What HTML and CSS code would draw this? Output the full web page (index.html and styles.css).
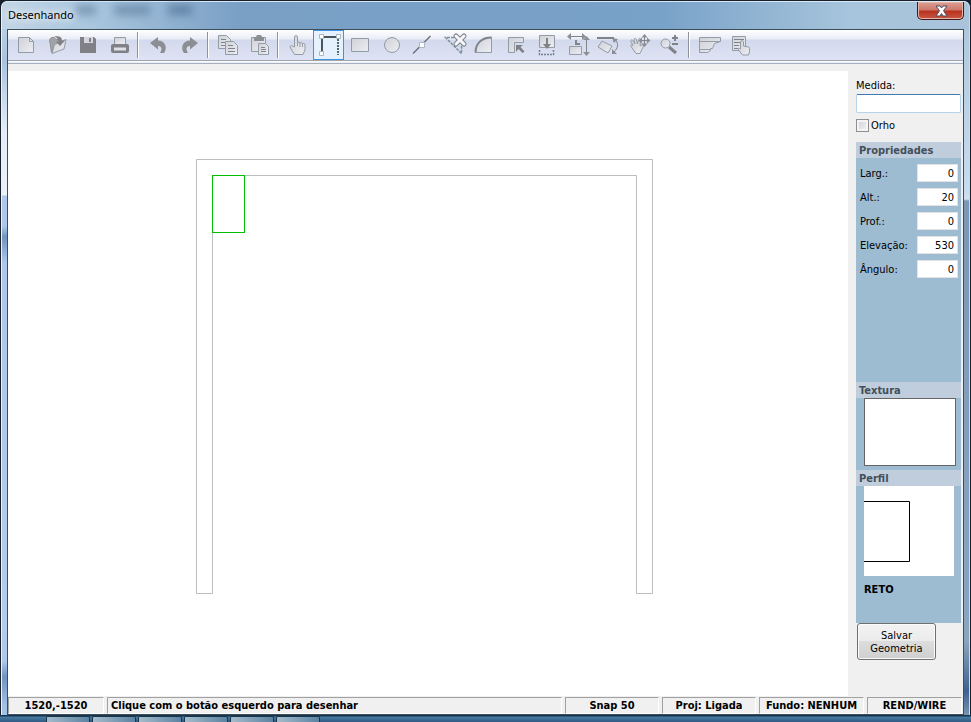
FILE: index.html
```html
<!DOCTYPE html>
<html lang="pt-BR">
<head>
    <meta charset="UTF-8">
    <title>Desenhando</title>
    <link rel="stylesheet" href="styles.css">
</head>
<body>
    <div class="window">
        <!-- Title bar -->
        <header class="titlebar">
            <div class="ghost-menu"></div>
            <h1 class="title">Desenhando</h1>
            <button class="close" aria-label="Fechar">
                <svg width="14" height="12" viewBox="0 0 14 12"><path d="M2 1h4l1.500 2 1.500-2h4l-3.500 4.700L13 11H9L7.500 8.500 6 11H2l3.500-5.300z" fill="#fff" stroke="#4d4a5c"/></svg>
            </button>
        </header>

        <div class="client">
            <!-- Toolbar -->
            <div class="toolbar">
                <button class="tool" aria-label="Novo"><svg viewBox="0 0 24 24"><defs><linearGradient id="metal" x1="0" y1="0" x2="1" y2="1"><stop offset="0" stop-color="#d0d1d5"/><stop offset="1" stop-color="#eceef4"/></linearGradient></defs><path class="face" d="M5.500 4.500h11l4 4v11h-15z"/><path class="thin" d="M16.500 4.500v4h4"/></svg></button>
                <button class="tool" aria-label="Abrir"><svg viewBox="0 0 24 24"><path d="M5.500 6.500l2-2h3l1 2h5l1 4-7 3-3 6z" fill="#a1a2a6" stroke="#8e9094"/><path class="face" d="M8 20.500l2.500-9L22 6.500l-2 9.500z"/><path class="dark" d="M10 3.500c5-1 8 0 8 4h3l-5 5.500-4-4.500h2.500c0-2-1-4-4.500-5z"/></svg></button>
                <button class="tool" aria-label="Salvar"><svg viewBox="0 0 24 24"><path class="dark" d="M5 4h14l2 2v14H5z"/><path d="M9 4h9v6H9z" fill="#d5d7df"/><path class="dark" d="M14 5h2v4h-2z"/></svg></button>
                <button class="tool" aria-label="Imprimir"><svg viewBox="0 0 24 24"><path class="face" d="M8.500 11V4.500h11V11"/><rect class="dark" x="5" y="11" width="18" height="9" rx="2"/><path d="M8 14.500h12v3H8z" fill="#dfe1e8"/></svg></button>
                <span class="sep"></span>
                <button class="tool" aria-label="Desfazer"><svg viewBox="0 0 24 24"><path class="soft" d="M5 10l8-6v3.500c7 0 10 7 6 12.500h-4c3-5 1-7-2-7v3.500z"/></svg></button>
                <button class="tool" aria-label="Refazer"><svg viewBox="0 0 24 24"><path class="soft" d="M22 10l-8-6v3.500C7 7.500 4 14.500 8 20h4c-3-5-1-7 2-7v3.500z"/></svg></button>
                <span class="sep"></span>
                <button class="tool" aria-label="Copiar"><svg viewBox="0 0 24 24"><path class="face" d="M3.500 2.500h8l4 4v9h-12z"/><path class="line" d="M6 6.500h5M6 9.500h7M6 12.500h6"/><path class="face" d="M10.500 8.500h8l4 4v9h-12z"/><path class="line" d="M13 12.500h5M13 15.500h7M13 18.500h7"/></svg></button>
                <button class="tool" aria-label="Colar"><svg viewBox="0 0 24 24"><path class="face" d="M5.500 4.500h14v14h-14z"/><path class="soft" d="M8 4h2l1-2h4l1 2h2v4H8z"/><path class="face" d="M12.500 10.500h7l3 3v8h-10z"/><path class="line" d="M15 14.500h4M15 16.500h5M15 18.500h5"/></svg></button>
                <span class="sep"></span>
                <button class="tool" aria-label="Selecionar"><svg viewBox="0 0 24 24"><path class="face" d="M9.500 14V4c0-2 3-2 3 0v6c0-1.500 2.500-1 2.500.5 0-1.500 2.500-1 2.500.5 0-1 2.500-1 2.500 1v5l-2 4.500H9.500L5.500 15c-1-2 .500-3 2-2z"/><path class="thin" d="M12.500 10v3M15 10.500V14M17.500 11v3"/></svg></button>
                <button class="tool active" aria-label="Polilinha"><svg viewBox="0 0 24 24"><path d="M6 5v14M7 4h14" stroke="#4c545c" stroke-width="2" fill="none"/><path d="M22 6v16" stroke="#4e6670" stroke-width="2" stroke-dasharray="2 1"/><path class="node" d="M3.500 1.500h4v4h-4zM20.500 1.500h4v4h-4zM3.500 18.500h4v4h-4z"/></svg></button>
                <button class="tool" aria-label="Retângulo"><svg viewBox="0 0 24 24"><path class="face" d="M4.500 5.500h17v13h-17z"/></svg></button>
                <button class="tool" aria-label="Círculo"><svg viewBox="0 0 24 24"><circle class="face" cx="14" cy="12" r="7.500"/></svg></button>
                <button class="tool" aria-label="Linha"><svg viewBox="0 0 24 24"><path d="M4 20.500L21.500 3" stroke="#6b7077" stroke-width="1.500"/><path class="node" d="M10.500 9.500h5v5h-5z"/></svg></button>
                <button class="tool" aria-label="Apagar"><svg viewBox="0 0 24 24"><path d="M14 4.500H5.500l16 16V12" fill="none" stroke="#7d9199" stroke-width="1.500" stroke-dasharray="3 1"/><path d="M16 3l8 8M24 3l-8 8" stroke="#7b8088" stroke-width="5" stroke-linecap="round"/><path d="M16 3l8 8M24 3l-8 8" stroke="#f6f7fb" stroke-width="3" stroke-linecap="round"/></svg></button>
                <button class="tool" aria-label="Arco"><svg viewBox="0 0 24 24"><path class="face" d="M4.500 19.500c0-9 6-15 16-15v15z"/><path class="line thick" d="M4.500 19.500c0-9 6-15 16-15"/></svg></button>
                <button class="tool" aria-label="Canto"><svg viewBox="0 0 24 24"><path class="face" d="M6.500 4.500h15v5h-9v10h-6z"/><path class="dark" d="M14 12h7l-2.500 2 4 4.500-2 1.500-4-4-2.500 3z"/></svg></button>
                <button class="tool" aria-label="Abaixar"><svg viewBox="0 0 24 24"><path class="face" d="M6.500 2.500h15v12h-15z"/><path d="M6.500 17v4.500h14V17" fill="none" stroke="#71858c" stroke-width="1.500" stroke-dasharray="2 1"/><path class="dark" d="M13 5h2v6h3l-4 5-4-5h3z"/></svg></button>
                <button class="tool" aria-label="Dimensionar"><svg viewBox="0 0 24 24"><path class="line" d="M6 3.500h12M22.500 7v12"/><path d="M12 7v4h4" class="line thick"/><path class="soft" d="M3 3.500L7 0v7zM22 3.500L18 0v7zM22.500 3L19 7h7zM22.500 23L19 19h7z"/><path class="face" d="M5.500 13.500h12v8h-12z"/></svg></button>
                <button class="tool" aria-label="Girar"><svg viewBox="0 0 24 24"><path class="line thick" d="M2 5h17"/><path class="face" d="M7 8l10 5-4 7-10-6z"/><path class="line" d="M20 6c4 5 3 9-1 13"/><path class="soft" d="M17 5l6 1-4 4zM17 16v5h5z"/></svg></button>
                <button class="tool" aria-label="Mover"><svg viewBox="0 0 24 24"><path class="face" d="M10 20.500l-5-7c-1-2 1-2 2-1L5 9c-1-2 1-3 2-1l2 3-1-4c0-2 2-2 2.500 0l1 4 1-4c0-2 2-2 2 0l-.5 6 2-1c2-1 2 1 1 2l-3 6.500z"/><path class="line" d="M18.500 3v9M14 7.500h9"/><path class="soft" d="M18.500 1L15.500 4.500h6zM18.500 14l-3-3.500h6zM12.500 7.500l3.500-3v6zM24.500 7.500l-3.500-3v6z"/></svg></button>
                <button class="tool" aria-label="Zoom"><svg viewBox="0 0 24 24"><circle class="face" cx="8.500" cy="10.500" r="4.500"/><path d="M12 14l7 6" stroke="#808287" stroke-width="3"/><path d="M15 5h6M18 2v6M15 11h6" stroke="#808287" stroke-width="2"/></svg></button>
                <span class="sep"></span>
                <button class="tool" aria-label="Perfil"><svg viewBox="0 0 24 24"><path class="face" d="M3.500 4.500h21v4l-6 2-2 5h-2v2l-3 2h-8z"/><path class="thin" d="M3 8.500h21M3 16.500h12"/></svg></button>
                <button class="tool" aria-label="Lista"><svg viewBox="0 0 24 24"><path class="face" d="M5.500 3.500h13v14h-13z"/><path class="line" d="M7 6.500h10M7 9.500h7M7 12.500h5M7 15.500h4"/><path class="face" d="M13.500 16V9c0-2 3-2 3 0v4l5 1c1 0 1 1 1 2v3l-1 3h-6l-4-5c-1-2 1-2 2-1z"/></svg></button>
            </div>

            <!-- Drawing area and properties -->
            <div class="workspace">
                <main class="canvas">
                    <svg class="drawing" width="458" height="436" viewBox="0 0 458 436">
                        <path d="M.5.500h456v434h-16v-418h-424v418H.5z" fill="none" stroke="#bdbdbd"/>
                        <rect x="16.500" y="16.500" width="32" height="57" fill="none" stroke="#00be00"/>
                    </svg>
                </main>

                <aside class="side">
                    <label for="medida">Medida:</label>
                    <input class="measure" id="medida" type="text">
                    <label class="check"><input type="checkbox">Orho</label>

                    <section class="panel">
                        <h2>Propriedades</h2>
                        <div class="props">
                            <label for="larg">Larg.:</label><input id="larg" type="text" value="0">
                            <label for="alt">Alt.:</label><input id="alt" type="text" value="20">
                            <label for="prof">Prof.:</label><input id="prof" type="text" value="0">
                            <label for="elevacao">Elevação:</label><input id="elevacao" type="text" value="530">
                            <label for="angulo">Ângulo:</label><input id="angulo" type="text" value="0">
                        </div>
                        <h2>Textura</h2>
                        <div class="texture"></div>
                        <h2>Perfil</h2>
                        <div class="profile">
                            <svg width="90" height="90" viewBox="0 0 90 90"><path d="M0 15.500h45.500v60H0" fill="none" stroke="#000"/></svg>
                        </div>
                        <p class="profile-name">RETO</p>
                    </section>

                    <button class="save">Salvar<br>Geometria</button>
                </aside>
            </div>

            <!-- Status bar -->
            <footer class="status">
                <span class="coords">1520,-1520</span>
                <span class="hint">Clique com o botão esquerdo para desenhar</span>
                <span class="snap">Snap 50</span>
                <span class="proj">Proj: Ligada</span>
                <span class="back">Fundo: NENHUM</span>
                <span class="mode">REND/WIRE</span>
            </footer>
        </div>
    </div>

    <div class="taskbar">
        <i></i><i></i><i></i><i></i><i></i><i></i>
    </div>
</body>
</html>
```
FILE: styles.css
```css
* {
    box-sizing: border-box;
}

body {
    display: flex;
    flex-direction: column;
    height: 100vh;
    margin: 0;
    overflow: hidden;
    background: #16222e;
    color: #000;
    font-family: "DejaVu Sans Condensed", Tahoma, sans-serif;
    font-size: 11px;
    line-height: 13px;
}

button,
input {
    font: inherit;
    color: inherit;
}

.window {
    flex: 1;
    display: flex;
    flex-direction: column;
    min-height: 0;
    padding: 0 6px;
    border: 1px solid #1a2029;
    border-bottom: 0;
    border-radius: 7px 7px 0 0;
    background:
        linear-gradient(#c3d8ea 0, #a9c4e0 60px, #e3ecf8 130px, #eaf1fb 194px, #adc8ec 195px, #adc8ec 225px, #6f95c0 236px, #adc8ec 262px, #b2cbee 630px, #adc8ec 660px, #6f95c0 676px, #a3c2e8 705px) left / 50% 100% no-repeat,
        linear-gradient(#a9c3da 0, #b5cce0 60px, #c9dbee 190px, #d3e1f1 198px, #7b98b6 200px, #8aa5c0 640px, #3d6290 690px, #7b98b6 715px) right / 50% 100% no-repeat;
    box-shadow: inset 1px 1px 0 #e8f3fb, inset -1px 0 0 #c5dced;
}

.titlebar {
    display: flex;
    justify-content: space-between;
    position: relative;
    height: 28px;
    margin: 0 -5px;
    padding-left: 6px;
    border-top: 1px solid #d7e9f6;
    border-radius: 6px 6px 0 0;
    background: linear-gradient(90deg, #c2d5e5 0, #a9c6de 90px, #799fc5 240px, #79a2c9 660px, #a7c5dc 850px, #a9c3da 100%);
}

.ghost-menu {
    position: absolute;
    left: 74px;
    top: 3px;
    width: 120px;
    height: 10px;
    background: linear-gradient(90deg, #496b8c 20px, transparent 20px, transparent 38px, #496b8c 38px, #496b8c 74px, transparent 74px, transparent 92px, #385b7e 92px, #385b7e 116px, transparent 116px);
    filter: blur(4px);
    opacity: 0.5;
}

.title {
    position: relative;
    margin: 6px 0 0;
    font-family: "Noto Sans", sans-serif;
    font-size: 11px;
    font-weight: normal;
    line-height: 14px;
    text-shadow: 0 0 8px #fff, 0 0 8px #fff;
}

.close {
    display: flex;
    align-items: center;
    justify-content: center;
    width: 47px;
    height: 18px;
    margin-right: 5px;
    padding: 0;
    border: 1px solid #3d1a20;
    border-top: 0;
    border-radius: 0 0 5px 5px;
    background: linear-gradient(#dca094 0, #cd7769 8px, #b8311f 9px, #ca5743 100%);
    box-shadow: inset 0 0 0 1px #e6b5a7;
}

.client {
    flex: 1;
    display: flex;
    flex-direction: column;
    min-height: 0;
    border: 1px solid #3c4d5b;
    background: #f0f0f0;
}

.toolbar {
    display: flex;
    height: 34px;
    padding: 0 0 4px 2px;
    background: linear-gradient(#fff 0, #e9ecf6 9px, #d3d9ec 10px, #dde2f4 30px, #a3a5ad 30px, #a3a5ad 31px, #fff 31px, #e6ebf9 33px, #a6b0bd 33px);
}

.tool {
    width: 31px;
    height: 30px;
    padding: 0 0 0 3px;
    border: 0;
    background: none;
    text-align: left;
}

.tool svg {
    display: block;
    width: 24px;
    height: 24px;
    overflow: visible;
}

.tool.active {
    background: #e5f1fd;
    box-shadow: inset 0 0 0 1px #3c94e4;
}

.sep {
    width: 2px;
    margin: 2px 3px;
    border-left: 1px solid #8e939b;
    background: #fff;
}

.face {
    fill: url(#metal);
    stroke: #929ca6;
}

.dark {
    fill: #7f8186;
}

.soft {
    fill: #8b8e93;
}

.line {
    fill: none;
    stroke: #7f848a;
}

.thin {
    fill: none;
    stroke: #979da5;
}

.thick {
    stroke-width: 2;
}

.node {
    fill: #fff;
    stroke: #a9b8c2;
}

.workspace {
    flex: 1;
    display: flex;
    min-height: 0;
    padding-top: 7px;
}

.canvas {
    flex: 1;
    padding: 88px 0 0 188px;
    background: #fff;
}

.drawing {
    display: block;
}

.side {
    display: flex;
    flex-direction: column;
    width: 115px;
    padding: 8px 2px 0 8px;
}

.measure {
    width: 100%;
    height: 19px;
    margin-top: 2px;
    border: 1px solid #b5d3ea;
    border-top-color: #3d7bad;
    border-radius: 2px;
    background: #fff;
}

.check {
    display: flex;
    align-items: center;
    gap: 2px;
    margin: 6px 0 10px;
}

.check input {
    appearance: none;
    width: 13px;
    height: 13px;
    margin: 0;
    border: 1px solid #8e8f8f;
    background: linear-gradient(135deg, #cbcfd5, #f6f6f6);
    box-shadow: inset 0 0 0 2px #f4f4f4;
}

.panel {
    height: 481px;
    background: #9dbbd1;
}

.panel h2 {
    height: 16px;
    margin: 0;
    padding-left: 3px;
    background: #c0cddc;
    color: #434f59;
    font-size: 11px;
    line-height: 17px;
}

.props {
    display: grid;
    grid-template-columns: 1fr 41px;
    grid-auto-rows: 18px;
    row-gap: 6px;
    align-content: start;
    align-items: center;
    height: 224px;
    padding: 6px 3px 0 4px;
}

.props input {
    width: 100%;
    height: 18px;
    padding: 0 3px;
    border: 1px solid #e3e3e3;
    background: #fff;
    text-align: right;
}

.texture {
    height: 68px;
    margin: 0 5px 4px 8px;
    border: 1px solid #656565;
    background: #fff;
}

.profile {
    width: 90px;
    height: 90px;
    margin-left: 8px;
    background: #fff;
}

.profile-name {
    margin: 7px 8px;
    font-weight: bold;
}

.save {
    width: 79px;
    height: 37px;
    margin-left: 1px;
    padding: 0;
    border: 1px solid #707070;
    border-radius: 3px;
    background: linear-gradient(#f3f3f3, #ebebeb 48%, #dddddd 50%, #cfcfcf);
    box-shadow: inset 0 0 0 1px #fafafa;
}

.status {
    display: flex;
    gap: 3px;
    height: 18px;
    padding: 1px 1px 0 0;
    font-weight: bold;
    line-height: 16px;
    text-align: center;
    white-space: nowrap;
}

.status span {
    border: 1px solid #a0a0a0;
    border-right-color: #fff;
    border-bottom-color: #fff;
}

.coords {
    width: 96px;
}

.status .hint {
    flex: 1;
    padding-left: 3px;
    text-align: left;
}

.snap,
.proj {
    width: 94px;
}

.back {
    width: 105px;
}

.mode {
    width: 95px;
}

.taskbar {
    display: flex;
    gap: 2px;
    height: 7px;
    padding: 1px 0 0 46px;
    background: linear-gradient(#16344c 1px, #4a7ba3 2px, #2e5a82);
}

.taskbar i {
    width: 44px;
    border: 1px solid #1c3547;
    border-bottom: 0;
    border-radius: 2px 2px 0 0;
    background: linear-gradient(90deg, #a5bccb, #5b83a3);
}
```
